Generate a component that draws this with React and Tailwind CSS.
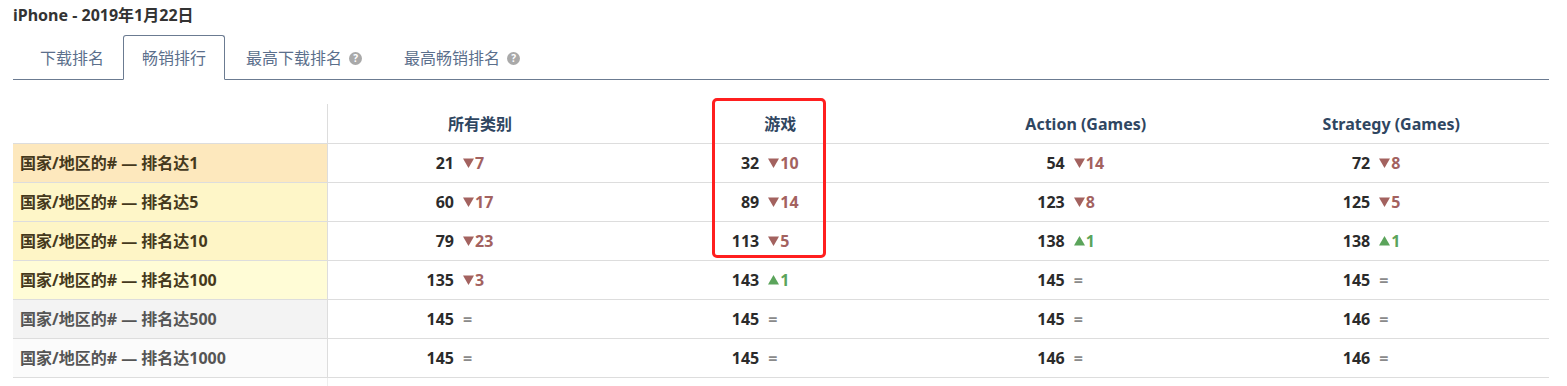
const rows = [
  { label: '国家/地区的# — 排名达1', bg: 'bg-[#fde8bd]', fg: 'text-[#45391c]', cells: [[21, 'd', 7], [32, 'd', 10], [54, 'd', 14], [72, 'd', 8]] },
  { label: '国家/地区的# — 排名达5', bg: 'bg-[#fef6c8]', fg: 'text-[#45391c]', cells: [[60, 'd', 17], [89, 'd', 14], [123, 'd', 8], [125, 'd', 5]] },
  { label: '国家/地区的# — 排名达10', bg: 'bg-[#fef5c6]', fg: 'text-[#45391c]', cells: [[79, 'd', 23], [113, 'd', 5], [138, 'u', 1], [138, 'u', 1]] },
  { label: '国家/地区的# — 排名达100', bg: 'bg-[#fffcd6]', fg: 'text-[#45391c]', cells: [[135, 'd', 3], [143, 'u', 1], [145, 'e'], [145, 'e']] },
  { label: '国家/地区的# — 排名达500', bg: 'bg-[#f3f3f3]', fg: 'text-[#555555]', cells: [[145, 'e'], [145, 'e'], [145, 'e'], [146, 'e']] },
  { label: '国家/地区的# — 排名达1000', bg: 'bg-[#fbfbfb]', fg: 'text-[#555555]', cells: [[145, 'e'], [145, 'e'], [146, 'e'], [146, 'e']] },
]

const columns = ['所有类别', '游戏', 'Action (Games)', 'Strategy (Games)']

function Help() {
  return (
    <span className="ml-[7px] inline-flex h-[13px] w-[13px] items-center justify-center rounded-full bg-[#a9a9a9] text-[10px] font-bold leading-none text-white">
      ?
    </span>
  )
}

function Change({ dir, value }) {
  if (dir === 'e') {
    return <span className="text-[#8a8a8a]">=</span>
  }
  const down = dir === 'd'
  return (
    <span className={`inline-flex items-center ${down ? 'text-[#a3625f]' : 'text-[#5ba45b]'}`}>
      <svg width="11" height="10" viewBox="0 0 11 10" className="mr-[1px]">
        {down ? <path d="M0 0.5 H11 L5.5 10 Z" fill="#a3625f" /> : <path d="M0 9.5 H11 L5.5 0 Z" fill="#5ba45b" />}
      </svg>
      {value}
    </span>
  )
}

export default function App() {
  return (
    <div className="relative h-[386px] w-[1567px] overflow-hidden bg-white px-[13px] font-['Noto_Sans','Noto_Sans_CJK_SC',sans-serif]">
      {/* Title */}
      <div className="pt-[5px] text-[16px] font-bold leading-[20px] text-[#333333]">iPhone - 2019年1月22日</div>

      {/* Tabs */}
      <div className="mt-[10px] flex w-[1536px] border-b border-[#6b7b91] pl-[8px] text-[16px] leading-[20px] text-[#5b6f8c]">
        <div className="border border-transparent px-[18px] pt-[12px] pb-[10px]">下载排名</div>
        <div className="-mb-px rounded-t-[3px] border border-[#6b7b91] border-b-white bg-white px-[18px] pt-[12px] pb-[10px]">畅销排行</div>
        <div className="ml-[2px] flex items-center border border-transparent px-[18px] pt-[12px] pb-[10px]">
          最高下载排名
          <Help />
        </div>
        <div className="ml-[4px] flex items-center border border-transparent px-[18px] pt-[12px] pb-[10px]">
          最高畅销排名
          <Help />
        </div>
      </div>

      {/* Table */}
      <table className="mt-[24px] w-[1536px] table-fixed border-collapse text-[16px] font-bold">
        <colgroup>
          <col className="w-[314px]" />
          <col />
          <col />
          <col />
          <col />
        </colgroup>
        <thead>
          <tr className="h-[39px]">
            <th className="border-r border-[#dddddd]" />
            {columns.map((c, i) => (
              <th key={c} className={`pt-[2px] text-center text-[#2f4661] ${i > 0 ? 'pr-[10px]' : ''}`}>{c}</th>
            ))}
          </tr>
        </thead>
        <tbody>
          {rows.map((r) => (
            <tr key={r.label} className="h-[39px] border-t border-[#dddddd]">
              <td className={`border-r border-[#dddddd] pl-[7px] ${r.bg} ${r.fg}`}>{r.label}</td>
              {r.cells.map(([n, dir, v], i) => (
                <td key={i} className="text-center">
                  <div className="inline-flex items-center">
                    <span className="w-[48px] text-right text-[#2b2b2b]">{n}</span>
                    <span className="w-[100px] pl-[9px] text-left">
                      <Change dir={dir} value={v} />
                    </span>
                  </div>
                </td>
              ))}
            </tr>
          ))}
          <tr className="h-[39px] border-t border-[#dddddd]">
            <td className="border-r border-[#eeeeee]" />
            <td />
            <td />
            <td />
            <td />
          </tr>
        </tbody>
      </table>

      {/* Annotation highlight */}
      <div className="pointer-events-none absolute left-[712px] top-[98px] h-[160px] w-[114px] rounded-[5px] border-[3px] border-[#ff1f1f]" />
    </div>
  )
}
